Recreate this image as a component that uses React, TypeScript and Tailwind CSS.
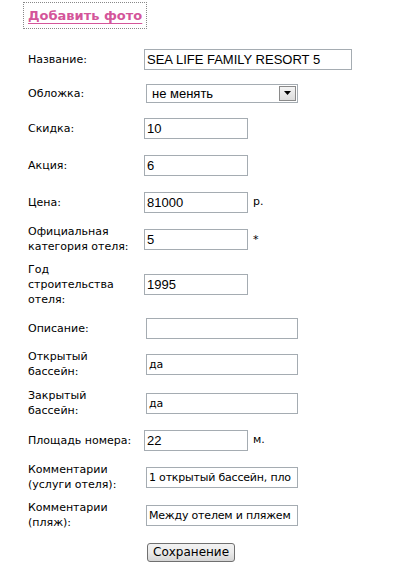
import React from 'react';

const labelFont = "[font-family:Tahoma,'DejaVu_Sans',sans-serif]";

type Row = {
  label: string[];
  value: string;
  kind: 'short' | 'long' | 'mid' | 'select';
  h: string;
  suffix?: string;
  valueFont?: 'arial' | 'tahoma';
};

const rows: Row[] = [
  { label: ['Название:'], value: 'SEA LIFE FAMILY RESORT 5', kind: 'long', h: 'h-[34px]', valueFont: 'arial' },
  { label: ['Обложка:'], value: 'не менять', kind: 'select', h: 'h-[34px]', valueFont: 'arial' },
  { label: ['Скидка:'], value: '10', kind: 'short', h: 'h-[36px]', valueFont: 'arial' },
  { label: ['Акция:'], value: '6', kind: 'short', h: 'h-[38px]', valueFont: 'arial' },
  { label: ['Цена:'], value: '81000', kind: 'short', h: 'h-[36px]', suffix: 'р.', valueFont: 'arial' },
  { label: ['Официальная', 'категория отеля:'], value: '5', kind: 'short', h: 'h-[38px]', suffix: '*', valueFont: 'arial' },
  { label: ['Год', 'строительства', 'отеля:'], value: '1995', kind: 'short', h: 'h-[52px]', valueFont: 'arial' },
  { label: ['Описание:'], value: '', kind: 'mid', h: 'h-[36px]' },
  { label: ['Открытый', 'бассейн:'], value: 'да', kind: 'mid', h: 'h-[36px]', valueFont: 'tahoma' },
  { label: ['Закрытый', 'бассейн:'], value: 'да', kind: 'mid', h: 'h-[42px]', valueFont: 'tahoma' },
  { label: ['Площадь номера:'], value: '22', kind: 'short', h: 'h-[32px]', suffix: 'м.', valueFont: 'arial' },
  { label: ['Комментарии', '(услуги отеля):'], value: '1 открытый бассейн, пло', kind: 'mid', h: 'h-[42px]', valueFont: 'tahoma' },
  { label: ['Комментарии', '(пляж):'], value: 'Между отелем и пляжем', kind: 'mid', h: 'h-[34px]', valueFont: 'tahoma' },
];

function Field({ row }: { row: Row }) {
  const font =
    row.valueFont === 'tahoma'
      ? "[font-family:Tahoma,'DejaVu_Sans',sans-serif] text-[11px] tracking-[-0.2px]"
      : "[font-family:Arial,'Liberation_Sans',sans-serif] text-[13px]";

  if (row.kind === 'select') {
    return (
      <div className="ml-[2px] w-[152px] h-[19px] border border-[#a5acb2] bg-white flex items-center">
        <span className={`flex-1 pl-[5px] text-[#000] ${font} leading-none`}>{row.value}</span>
        <span className="w-[17px] h-[15px] mr-[1px] border border-[#8a8a8a] bg-gradient-to-b from-[#f4f4f4] to-[#dcdcdc] flex items-center justify-center">
          <svg width="7" height="4" viewBox="0 0 7 4">
            <path d="M0 0h7L3.5 4z" fill="#000" />
          </svg>
        </span>
      </div>
    );
  }

  const width =
    row.kind === 'long' ? 'w-[208px]' : row.kind === 'short' ? 'w-[104px]' : 'ml-[2px] w-[152px]';

  return (
    <div className={`${width} h-[21px] border border-[#a5acb2] bg-white flex items-center overflow-hidden`}>
      <span className={`pl-[2px] whitespace-nowrap text-[#000] ${font} leading-none`}>{row.value}</span>
    </div>
  );
}

export default function App() {
  return (
    <div className={`w-[404px] h-[573px] bg-white overflow-hidden ${labelFont} text-[11px] text-black`}>
      <div className="pt-[2px] pl-[23px]">
        <a
          href="#"
          className="inline-block border border-dotted border-[#888] px-[4px] h-[27px] leading-[26px] text-[13px] font-bold text-[#d4559a] underline underline-offset-[3px]"
        >
          Добавить фото
        </a>
      </div>

      <div className="mt-[13px] pl-[28px]">
        {rows.map((row) => (
          <div key={row.label.join(' ')} className={`flex items-center ${row.h}`}>
            <div className="w-[116px] leading-[15px]">
              {row.label.map((l) => (
                <div key={l}>{l}</div>
              ))}
            </div>
            <Field row={row} />
            {row.suffix && (
              <span className={`ml-[5px] ${row.suffix === '*' ? 'self-start mt-[12px]' : ''}`}>{row.suffix}</span>
            )}
          </div>
        ))}

        <div className="h-[40px] flex items-center">
          <div className="w-[119px]" />
          <button className="h-[19px] px-[5px] rounded-[3px] border border-[#707070] bg-gradient-to-b from-[#f2f2f2] via-[#ebebeb] to-[#d5d5d5] text-[12px] leading-none text-black">
            Сохранение
          </button>
        </div>
      </div>
    </div>
  );
}
